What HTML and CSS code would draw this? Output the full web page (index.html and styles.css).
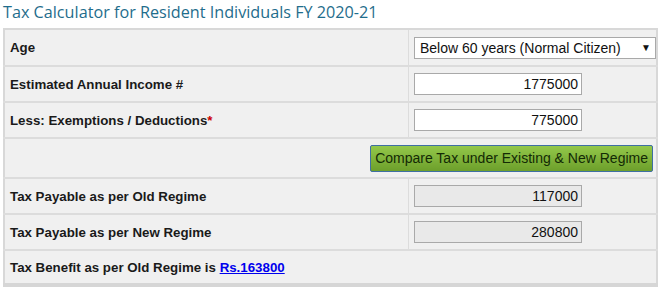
FILE: index.html
```html
<!DOCTYPE html>
<html>
<head>
<meta charset="utf-8">
<link rel="stylesheet" href="styles.css">
</head>
<body>
<div class="page">
  <h1 class="title">Tax Calculator for Resident Individuals FY 2020-21</h1>
  <table class="calc">
    <tr class="r-age">
      <td class="lbl">Age</td>
      <td class="val">
        <div class="select"><span>Below 60 years (Normal Citizen)</span><span class="arrow">▼</span></div>
      </td>
    </tr>
    <tr>
      <td class="lbl">Estimated Annual Income #</td>
      <td class="val"><div class="input">1775000</div></td>
    </tr>
    <tr>
      <td class="lbl">Less: Exemptions / Deductions<span class="req">*</span></td>
      <td class="val"><div class="input">775000</div></td>
    </tr>
    <tr class="r-btn">
      <td class="btncell" colspan="2"><button class="btn">Compare Tax under Existing &amp; New Regime</button></td>
    </tr>
    <tr>
      <td class="lbl">Tax Payable as per Old Regime</td>
      <td class="val"><div class="input ro">117000</div></td>
    </tr>
    <tr>
      <td class="lbl">Tax Payable as per New Regime</td>
      <td class="val"><div class="input ro">280800</div></td>
    </tr>
    <tr class="r-last">
      <td class="lbl" colspan="2">Tax Benefit as per Old Regime is <a class="link" href="#">Rs.163800</a></td>
    </tr>
  </table>
</div>
</body>
</html>
```
FILE: styles.css
```css
html, body { margin: 0; padding: 0; background: #ffffff; }
.page { padding: 0 2px 0 3px; }
.title {
  margin: 0;
  height: 28px;
  font-family: "Open Sans", "DejaVu Sans", sans-serif;
  font-weight: 400;
  font-size: 16.2px;
  line-height: 24px;
  color: #1f6d8c;
}
.calc {
  width: 655px;
  border-collapse: collapse;
  background: #f0f0f0;
  border: 2px solid #d8d8d8;
  border-bottom: 4px solid #d6d6d6;
  font-family: "Liberation Sans", Arial, sans-serif;
}
.calc td {
  border-top: 2px solid #dcdcdc;
  padding: 0;
  height: 34px;
  vertical-align: middle;
}
.calc tr:first-child td { border-top: none; height: 35px; }
.lbl {
  font-weight: bold;
  font-size: 13.3px;
  color: #1a1a1a;
  padding-left: 5px !important;
  width: 401px;
  border-right: 1px solid #dcdcdc;
}
.r-last .lbl { border-right: none; height: 32px; }
.val { padding-left: 5px !important; }
.req { color: #cc0000; }
.select {
  width: 231px;
  height: 20px;
  border: 1px solid #a9a9a9;
  background: #ffffff;
  display: flex;
  align-items: center;
  justify-content: space-between;
  padding: 0 4px 0 5px;
  font-size: 14px;
  color: #111;
}
.arrow { font-size: 10px; color: #111; }
.input {
  width: 160px;
  height: 20px;
  border: 1px solid #a9a9a9;
  background: #ffffff;
  text-align: right;
  font-size: 14px;
  line-height: 20px;
  padding: 0 3px;
  color: #111;
}
.input.ro { background: #e9e9e9; }
.r-btn td { height: 38px; text-align: right; padding-right: 3px !important; }
.btn {
  height: 27px;
  padding: 0 4px;
  font-family: "Liberation Sans", Arial, sans-serif;
  font-size: 14px;
  color: #132a05;
  background: linear-gradient(#93c84a, #6d9f2b);
  border: 1px solid #3f6fa3;
  border-radius: 2px;
}
.link { color: #0000ee; text-decoration: underline; }
```
